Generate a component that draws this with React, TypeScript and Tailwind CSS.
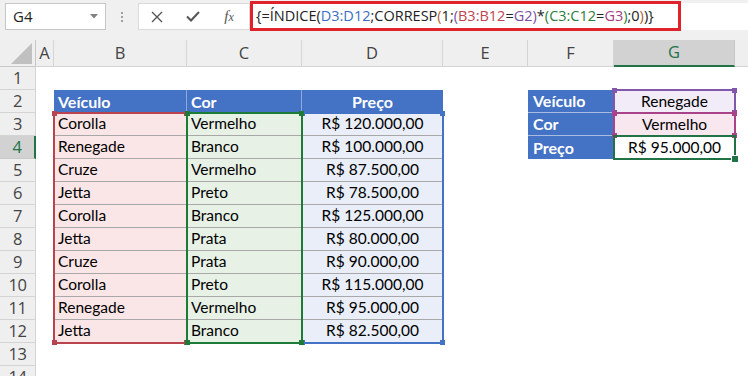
import React from "react";

type Row = { v: string; c: string; p: string };

const data: Row[] = [
  { v: "Corolla", c: "Vermelho", p: "R$ 120.000,00" },
  { v: "Renegade", c: "Branco", p: "R$ 100.000,00" },
  { v: "Cruze", c: "Vermelho", p: "R$ 87.500,00" },
  { v: "Jetta", c: "Preto", p: "R$ 78.500,00" },
  { v: "Corolla", c: "Branco", p: "R$ 125.000,00" },
  { v: "Jetta", c: "Prata", p: "R$ 80.000,00" },
  { v: "Cruze", c: "Prata", p: "R$ 90.000,00" },
  { v: "Corolla", c: "Preto", p: "R$ 115.000,00" },
  { v: "Renegade", c: "Vermelho", p: "R$ 95.000,00" },
  { v: "Jetta", c: "Branco", p: "R$ 82.500,00" },
];

function RowHead({ n, selected }: { n: number; selected?: boolean }) {
  return (
    <div
      className={
        selected
          ? "w-[36px] shrink-0 h-full flex items-center justify-center bg-[#d2d2d2] border-b border-[#c8c8c8] border-r-2 border-r-[#217346] text-[#217346] font-['Open_Sans',sans-serif] text-[16.5px] tracking-[-0.5px]"
          : "w-[36px] shrink-0 h-full flex items-center justify-center bg-[#efefef] border-b border-r border-[#d4d4d4] text-[#444] font-['Open_Sans',sans-serif] text-[16.5px] tracking-[-0.5px]"
      }
    >
      {n}
    </div>
  );
}

function Handle({ cls }: { cls: string }) {
  return <div className={cls} />;
}

function FormulaText() {
  return (
    <span className="font-['Open_Sans',sans-serif] text-[14.5px] text-[#222] whitespace-nowrap">
      <span>{"{=ÍNDICE("}</span>
      <span className="text-[#3a6ec2]">D3:D12</span>
      <span>;CORRESP</span>
      <span className="text-[#b0622e]">(</span>
      <span>1;</span>
      <span className="text-[#7b4fa3]">(</span>
      <span className="text-[#c0444f]">B3:B12</span>
      <span>=</span>
      <span className="text-[#7b4fa3]">G2</span>
      <span className="text-[#7b4fa3]">)</span>
      <span>*</span>
      <span className="text-[#2a7f3b]">(</span>
      <span className="text-[#2a7f3b]">C3:C12</span>
      <span>=</span>
      <span className="text-[#a5407f]">G3</span>
      <span className="text-[#2a7f3b]">)</span>
      <span>;0</span>
      <span className="text-[#b0622e]">)</span>
      <span>{")}"}</span>
    </span>
  );
}

export default function App() {
  return (
    <div className="w-[748px] h-[376px] overflow-hidden bg-white font-['Lato',sans-serif] text-black select-none">
      {/* Formula bar */}
      <div className="flex items-start h-[40px] bg-[#f0f0f0]">
        <div className="ml-[5px] mt-[3px] w-[101px] h-[27px] bg-white border border-[#c6c6c6] flex items-center justify-between pl-[7px] pr-[7px]">
          <span className="font-['Open_Sans',sans-serif] text-[15px] text-[#222]">G4</span>
          <svg width="8" height="5" viewBox="0 0 8 5">
            <path d="M0 0 L8 0 L4 4.5 Z" fill="#808080" />
          </svg>
        </div>
        <div className="w-[32px] h-[27px] mt-[3px] flex flex-col items-center justify-center gap-[2px]">
          <div className="w-[2px] h-[2px] bg-[#a0a0a0]" />
          <div className="w-[2px] h-[2px] bg-[#a0a0a0]" />
          <div className="w-[2px] h-[2px] bg-[#a0a0a0]" />
        </div>
        <div className="mt-[3px] w-[112px] h-[27px] bg-white border border-[#dadada] flex items-center">
          <div className="w-[36px] flex justify-center">
            <svg width="12" height="12" viewBox="0 0 12 12">
              <path d="M1 1 L11 11 M11 1 L1 11" stroke="#555" strokeWidth="1.4" />
            </svg>
          </div>
          <div className="w-[36px] flex justify-center">
            <svg width="14" height="11" viewBox="0 0 14 11">
              <path d="M1 5.5 L5 9.5 L13 1" stroke="#555" strokeWidth="2" fill="none" />
            </svg>
          </div>
          <div className="w-[36px] flex justify-center">
            <span className="font-['Liberation_Serif',serif] italic text-[15px] text-[#555] leading-none">
              f<span className="text-[12px]">x</span>
            </span>
          </div>
        </div>
        <div className="mt-[1px] w-[431px] h-[30px] border-[3px] border-[#e0232b] bg-white flex items-center pl-[3px] pb-[1px]">
          <FormulaText />
        </div>
        <div className="mt-[3px] flex-1 h-[27px] bg-white" />
      </div>

      {/* Sheet */}
      <div className="relative">
        {/* Column headers */}
        <div className="flex h-[27px] font-['Open_Sans',sans-serif] text-[16.5px] text-[#444]">
          <div className="w-[36px] shrink-0 bg-[#efefef] border-r border-b border-[#c8c8c8] flex items-end justify-end pr-[3px] pb-[2px]">
            <svg width="21" height="21" viewBox="0 0 21 21">
              <path d="M21 0 L21 21 L0 21 Z" fill="#c0c0c0" />
            </svg>
          </div>
          <div className="w-[18px] shrink-0 bg-[#efefef] border-r border-b border-[#d4d4d4] flex items-center justify-center">A</div>
          <div className="w-[133px] shrink-0 bg-[#efefef] border-r border-b border-[#d4d4d4] flex items-center justify-center">B</div>
          <div className="w-[115px] shrink-0 bg-[#efefef] border-r border-b border-[#d4d4d4] flex items-center justify-center">C</div>
          <div className="w-[141px] shrink-0 bg-[#efefef] border-r border-b border-[#d4d4d4] flex items-center justify-center">D</div>
          <div className="w-[85px] shrink-0 bg-[#efefef] border-r border-b border-[#d4d4d4] flex items-center justify-center">E</div>
          <div className="w-[86px] shrink-0 bg-[#efefef] border-r border-b border-[#d4d4d4] flex items-center justify-center">F</div>
          <div className="w-[121px] shrink-0 bg-[#d2d2d2] border-r border-[#c8c8c8] border-b-2 border-b-[#217346] flex items-center justify-center text-[#217346]">G</div>
          <div className="flex-1 bg-[#efefef] border-b border-[#d4d4d4]" />
        </div>

        {/* Row 1 */}
        <div className="flex h-[23px]">
          <RowHead n={1} />
        </div>

        {/* Row 2 */}
        <div className="flex h-[23px] text-[15.5px]">
          <RowHead n={2} />
          <div className="w-[18px] shrink-0" />
          <div className="w-[133px] shrink-0 bg-[#4472c4] border-r border-[#8eaadb] text-white font-bold text-[16px] flex items-center pl-[4px]">Veículo</div>
          <div className="w-[115px] shrink-0 bg-[#4472c4] border-r border-[#8eaadb] text-white font-bold text-[16px] flex items-center pl-[4px]">Cor</div>
          <div className="w-[141px] shrink-0 bg-[#4472c4] text-white font-bold text-[16px] flex items-center justify-center">Preço</div>
          <div className="w-[85px] shrink-0" />
          <div className="w-[86px] shrink-0 bg-[#4472c4] border-b border-[#a9bbe0] text-white font-bold text-[16px] flex items-center pl-[5px]">Veículo</div>
          <div className="w-[121px] shrink-0 bg-[#f1ecf7] flex items-center justify-center">Renegade</div>
        </div>

        {/* Rows 3..12 */}
        {data.map((r, i) => {
          const n = i + 3;
          return (
            <div key={n} className="flex h-[23px] text-[15.5px]">
              <RowHead n={n} selected={n === 4} />
              <div className="w-[18px] shrink-0" />
              <div className="w-[133px] shrink-0 bg-[#fbe6e7] border-b border-[#a8a8a8] flex items-center pl-[4px]">{r.v}</div>
              <div className="w-[115px] shrink-0 bg-[#e7f1e6] border-b border-[#a8a8a8] flex items-center pl-[4px]">{r.c}</div>
              <div className="w-[141px] shrink-0 bg-[#e9eef8] border-b border-[#a8a8a8] flex items-center justify-center">{r.p}</div>
              <div className="w-[85px] shrink-0" />
              {n === 3 && (
                <>
                  <div className="w-[86px] shrink-0 bg-[#4472c4] border-b border-[#a9bbe0] text-white font-bold text-[16px] flex items-center pl-[5px]">Cor</div>
                  <div className="w-[121px] shrink-0 bg-[#f9e7ef] flex items-center justify-center">Vermelho</div>
                </>
              )}
              {n === 4 && (
                <>
                  <div className="w-[86px] shrink-0 bg-[#4472c4] text-white font-bold text-[16px] flex items-center pl-[5px]">Preço</div>
                  <div className="w-[121px] shrink-0 bg-white flex items-center justify-center">R$ 95.000,00</div>
                </>
              )}
            </div>
          );
        })}

        {/* Rows 13, 14 */}
        <div className="flex h-[23px]">
          <RowHead n={13} />
        </div>
        <div className="flex h-[23px]">
          <RowHead n={14} />
        </div>

        {/* Range highlight overlays (sheet coords: y = page y - 40) */}
        <div className="absolute left-[53px] top-[72px] w-[135px] h-[232px] border-2 border-[#b9434f] pointer-events-none">
          <Handle cls="absolute -left-[3px] -top-[3px] w-[5px] h-[5px] bg-[#b9434f]" />
          <Handle cls="absolute -right-[3px] -top-[3px] w-[5px] h-[5px] bg-[#b9434f]" />
          <Handle cls="absolute -left-[3px] -bottom-[3px] w-[5px] h-[5px] bg-[#b9434f]" />
          <Handle cls="absolute -right-[3px] -bottom-[3px] w-[5px] h-[5px] bg-[#b9434f]" />
        </div>
        <div className="absolute left-[301px] top-[72px] w-[143px] h-[232px] border-2 border-[#4472c4] pointer-events-none">
          <Handle cls="absolute -left-[3px] -top-[3px] w-[5px] h-[5px] bg-[#4472c4]" />
          <Handle cls="absolute -right-[3px] -top-[3px] w-[5px] h-[5px] bg-[#4472c4]" />
          <Handle cls="absolute -left-[3px] -bottom-[3px] w-[5px] h-[5px] bg-[#4472c4]" />
          <Handle cls="absolute -right-[3px] -bottom-[3px] w-[5px] h-[5px] bg-[#4472c4]" />
        </div>
        <div className="absolute left-[186px] top-[72px] w-[117px] h-[232px] border-2 border-[#1d7b38] pointer-events-none">
          <Handle cls="absolute -left-[3px] -top-[3px] w-[5px] h-[5px] bg-[#1d7b38]" />
          <Handle cls="absolute -right-[3px] -top-[3px] w-[5px] h-[5px] bg-[#1d7b38]" />
          <Handle cls="absolute -left-[3px] -bottom-[3px] w-[5px] h-[5px] bg-[#1d7b38]" />
          <Handle cls="absolute -right-[3px] -bottom-[3px] w-[5px] h-[5px] bg-[#1d7b38]" />
        </div>
        <div className="absolute left-[613px] top-[49px] w-[123px] h-[25px] border-2 border-[#8057aa] pointer-events-none">
          <Handle cls="absolute -left-[3px] -top-[3px] w-[5px] h-[5px] bg-[#8057aa]" />
          <Handle cls="absolute -right-[3px] -top-[3px] w-[5px] h-[5px] bg-[#8057aa]" />
          <Handle cls="absolute -left-[3px] -bottom-[3px] w-[5px] h-[5px] bg-[#8057aa]" />
          <Handle cls="absolute -right-[3px] -bottom-[3px] w-[5px] h-[5px] bg-[#8057aa]" />
        </div>
        <div className="absolute left-[613px] top-[72px] w-[123px] h-[25px] border-2 border-[#a8438a] pointer-events-none">
          <Handle cls="absolute -left-[3px] -top-[3px] w-[5px] h-[5px] bg-[#a8438a]" />
          <Handle cls="absolute -right-[3px] -top-[3px] w-[5px] h-[5px] bg-[#a8438a]" />
          <Handle cls="absolute -left-[3px] -bottom-[3px] w-[5px] h-[5px] bg-[#a8438a]" />
          <Handle cls="absolute -right-[3px] -bottom-[3px] w-[5px] h-[5px] bg-[#a8438a]" />
        </div>
        <div className="absolute left-[613px] top-[95px] w-[123px] h-[25px] border-2 border-[#217346] pointer-events-none">
          <Handle cls="absolute -right-[4px] -bottom-[4px] w-[6px] h-[6px] bg-[#217346] outline outline-1 outline-white" />
        </div>
      </div>
    </div>
  );
}
